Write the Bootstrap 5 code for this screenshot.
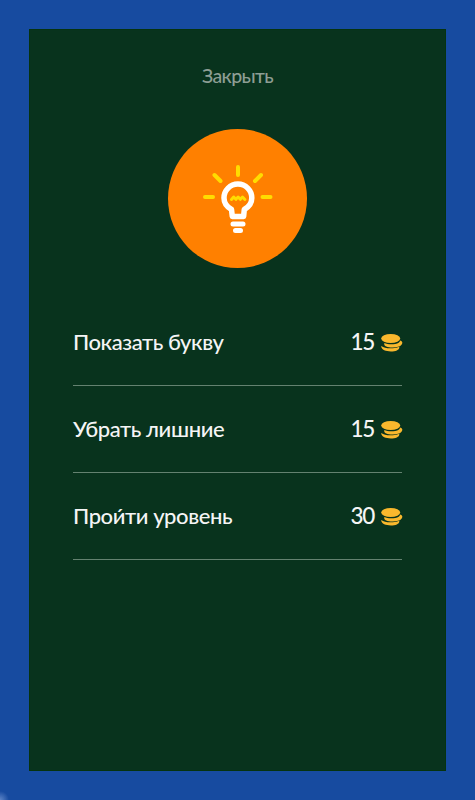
<!DOCTYPE html>
<html lang="ru">
<head>
<meta charset="utf-8">
<meta name="viewport" content="width=device-width, initial-scale=1">
<title>Подсказки</title>
<link href="https://cdn.jsdelivr.net/npm/bootstrap@5.3.0/dist/css/bootstrap.min.css" rel="stylesheet">
<style>
body{background:radial-gradient(circle at 0 100%,#5f86c8 0,#174ba0 9px) #174ba0;font-family:Lato,"Open Sans",sans-serif;height:800px;padding:29px;overflow:hidden}
.hint-panel{background:#08331d;height:742px;padding:0 44px;box-shadow:inset 0 0 0 1px #06330f}
.close-btn{color:#8d9e94;font-size:19.500px;line-height:24px;margin-top:35px;font-weight:500;letter-spacing:-.65px}
.bulb-disc{width:139px;height:139px;margin-top:41px;background:#ff8000}
.hint-list{margin-top:31px}
.hint-row{height:87px;border-bottom:1px solid #648270;color:#f5f5f5;font-size:22px;line-height:28px;font-weight:500;letter-spacing:-.42px}
.hint-cost{gap:7px;font-size:22.500px;letter-spacing:-1.300px}
.coins{width:22px;height:19px;margin-right:-1px}
</style>
<script src="https://cdn.jsdelivr.net/npm/bootstrap@5.3.0/dist/js/bootstrap.bundle.min.js"></script>
</head>
<body>
<svg class="d-none"><symbol id="coins" viewBox="0 0 22 19"><g fill="#f9b82d"><path d="M.3 12.900c2.500 2.100 7 2.700 11.300 2.300 2.900-.3 5-.8 6.700-1.500.4 3.200-3.500 4.700-8.500 4.700S-.3 16.400.3 12.900Z"/><path d="M3.300 9.900c2.700 1.400 7 1.500 11 1 2.900-.4 4.400-1.400 4.900-3.400 2.500.6 2.600 2.400 1.500 4.100-1.500 2.200-5 2.900-9.200 2.900-4.800 0-9-1.200-8.200-4.600Z"/><ellipse cx="9.700" cy="5.500" rx="9.500" ry="4.500"/></g></symbol></svg>
<main class="hint-panel d-flex flex-column">
  <button type="button" class="close-btn border-0 bg-transparent p-0 align-self-center">Закрыть</button>
  <div class="bulb-disc rounded-circle align-self-center">
    <svg class="d-block" width="139" height="139" viewBox="168 129 139 139" fill="none" stroke-linecap="round" stroke-linejoin="round">
      <g stroke="#ffdc00" stroke-width="4"><path d="M238 167v8M214.500 175l6 6M261 175l-6 6M205 197h8M262.500 197h8"/><path stroke-width="3" d="M231.500 199.500l2.200-2.500 2.200 2.300 2.200-2.300 2.200 2.300 2.200-2.300 2.400 2.500"/></g>
      <g stroke="#fff"><path stroke-width="5.500" d="M232.300 216.500h11.300l.7-7c4.200-2.400 7.500-6 7.500-11.500a13.900 13.900 0 0 0-27.800 0c0 5.500 3.300 9.100 7.500 11.500Z"/><path stroke-width="5" d="M233 224h10M235.500 230.500h5"/></g>
    </svg>
  </div>
  <div class="hint-list">
    <div class="hint-row d-flex align-items-center justify-content-between"><span>Показать букву</span><span class="hint-cost d-flex align-items-center">15 <svg class="coins"><use href="#coins"/></svg></span></div>
    <div class="hint-row d-flex align-items-center justify-content-between"><span>Убрать лишние</span><span class="hint-cost d-flex align-items-center">15 <svg class="coins"><use href="#coins"/></svg></span></div>
    <div class="hint-row d-flex align-items-center justify-content-between"><span>Прои́ти уровень</span><span class="hint-cost d-flex align-items-center">30 <svg class="coins"><use href="#coins"/></svg></span></div>
  </div>
</main>
</body>
</html>
